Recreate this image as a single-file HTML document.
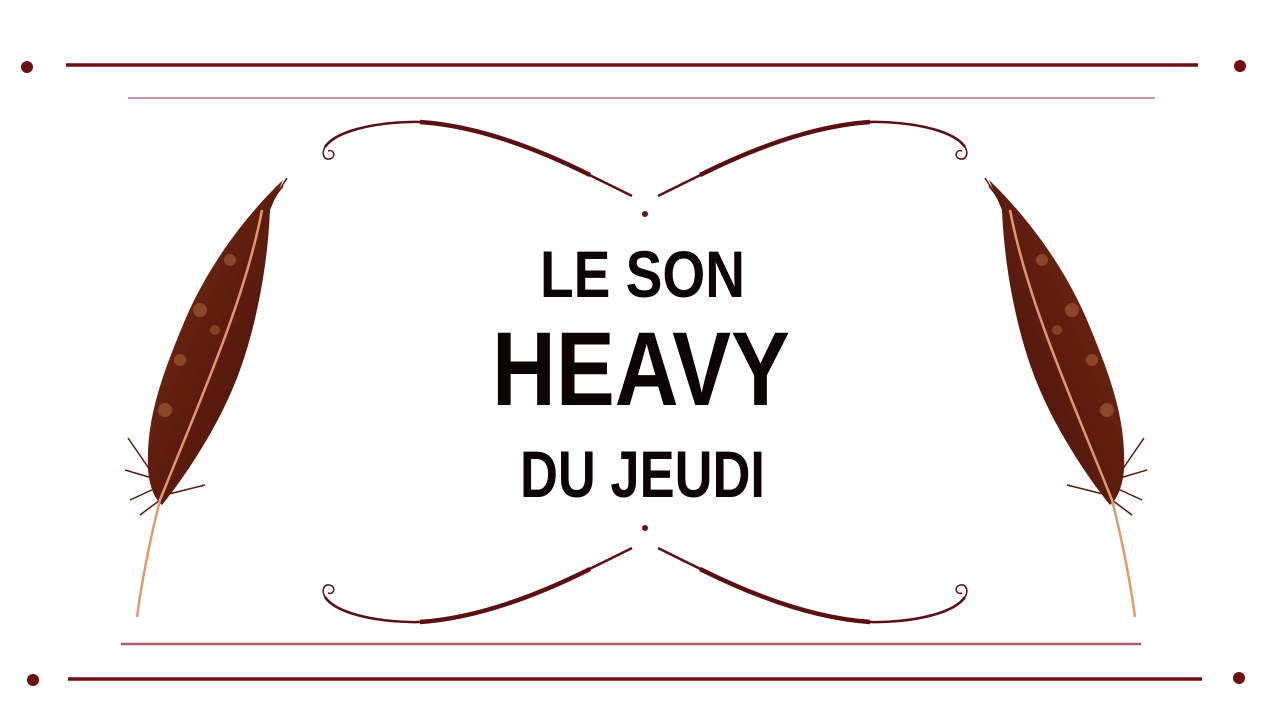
<!DOCTYPE html>
<html><head><meta charset="utf-8"><style>
html,body{margin:0;padding:0;background:#fff;width:1280px;height:720px;overflow:hidden}
svg{display:block}
</style></head><body>
<svg width="1280" height="720" viewBox="0 0 1280 720" xmlns="http://www.w3.org/2000/svg">
<defs>
<linearGradient id="fg" x1="0" y1="0" x2="1" y2="1">
<stop offset="0" stop-color="#7a3018"/><stop offset="0.5" stop-color="#5e1c0e"/><stop offset="1" stop-color="#3e1008"/>
</linearGradient>
<g id="feather">
<path d="M283,180 C262,200 215,250 185,320 C160,380 146,420 148,470 C150,490 156,500 162,505 C190,470 222,420 240,370 C258,320 268,260 270,210 Z" fill="url(#fg)"/>
<path d="M150,470 L128,438 M152,478 L125,470 M156,488 L130,500 M165,495 L205,485 M160,500 L140,515 M270,205 L287,178 M272,200 L283,186" stroke="#5a1a0c" stroke-width="1.5" fill="none"/>
<circle cx="230" cy="260" r="6" fill="#a86038" opacity="0.6"/>
<circle cx="200" cy="310" r="7" fill="#a86038" opacity="0.6"/>
<circle cx="180" cy="360" r="6" fill="#a86038" opacity="0.6"/>
<circle cx="165" cy="410" r="7" fill="#a86038" opacity="0.6"/>
<circle cx="215" cy="330" r="5" fill="#a86038" opacity="0.5"/>
<path d="M262,210 C245,300 200,400 160,500 C150,540 142,580 137,617" stroke="#e39a6a" stroke-width="2.5" fill="none"/>
</g>
<g id="flour" fill="none" stroke="#5a0f12">
<path d="M632,196 C560,160 480,120 410,122 C370,123 335,132 325,147" stroke-width="2.5"/>
<path d="M590,175 C540,150 480,126 420,122" stroke-width="4.5"/>
<path d="M325,147 C320,155 326,162 332,158 C336,155 333,149 328,151" stroke-width="1.5"/>
</g>
</defs>
<g stroke="#6e0f12" stroke-width="3.5">
<line x1="66" y1="65" x2="1198" y2="65"/>
<line x1="68" y1="679" x2="1202" y2="679"/>
</g>
<line x1="128" y1="98" x2="1155" y2="98" stroke="#b07a84" stroke-width="1.5"/>
<line x1="121" y1="644" x2="1141" y2="644" stroke="#a8606c" stroke-width="2.5"/>
<g fill="#6e0f12">
<circle cx="27" cy="67" r="6"/><circle cx="1240" cy="66" r="6"/>
<circle cx="33" cy="680" r="6"/><circle cx="1239" cy="678" r="6"/>
<circle cx="645" cy="214" r="3"/><circle cx="645" cy="528" r="3"/>
</g>
<use href="#flour"/>
<use href="#flour" transform="translate(1290,0) scale(-1,1)"/>
<use href="#flour" transform="translate(0,744) scale(1,-1)"/>
<use href="#flour" transform="translate(1290,744) scale(-1,-1)"/>
<use href="#feather"/>
<use href="#feather" transform="translate(1272,0) scale(-1,1)"/>
<g fill="#0d0505" font-family="Liberation Sans, sans-serif" font-weight="bold">
<text x="540" y="297" font-size="66" textLength="205" lengthAdjust="spacingAndGlyphs">LE SON</text>
<text x="492" y="405" font-size="105" textLength="298" lengthAdjust="spacingAndGlyphs">HEAVY</text>
<text x="520" y="497" font-size="66" textLength="245" lengthAdjust="spacingAndGlyphs">DU JEUDI</text>
</g>
</svg>
</body></html>
